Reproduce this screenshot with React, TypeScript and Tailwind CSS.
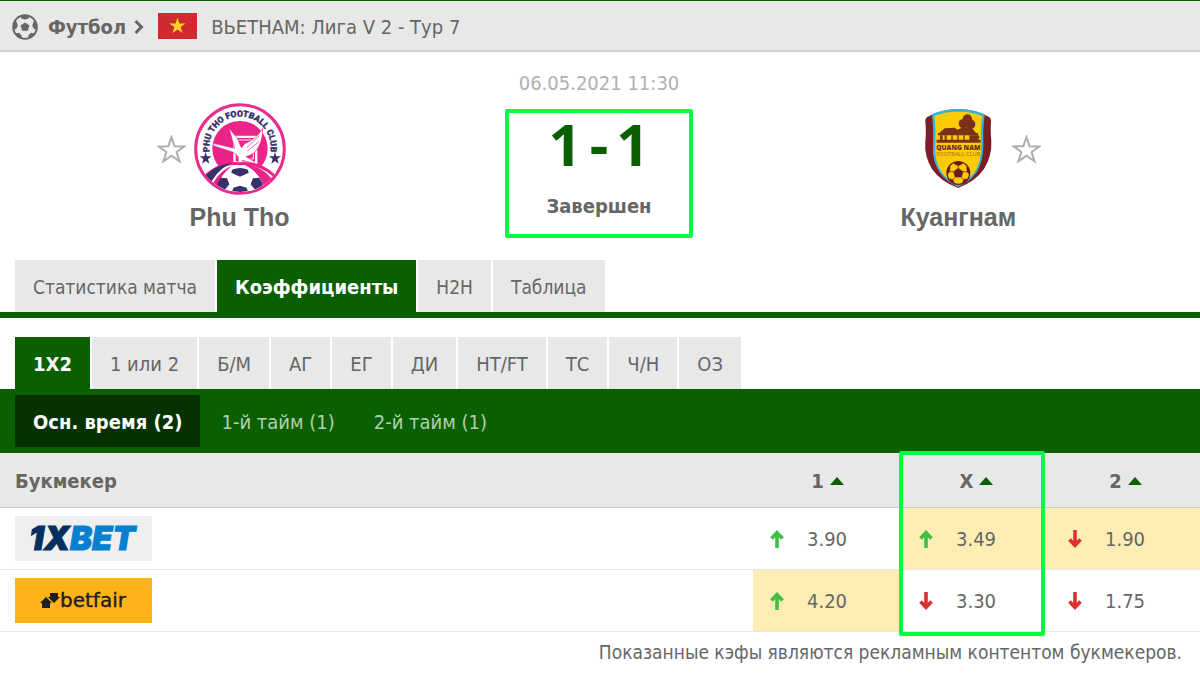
import { ReactNode } from "react";

type Trend = "up" | "down";

interface Odd {
  value: string;
  trend: Trend;
  best?: boolean;
}

const mainTabs = ["Статистика матча", "Коэффициенты", "H2H", "Таблица"];
const marketTabs = ["1X2", "1 или 2", "Б/М", "АГ", "ЕГ", "ДИ", "HT/FT", "ТС", "Ч/Н", "ОЗ"];
const periodTabs = ["Осн. время (2)", "1-й тайм (1)", "2-й тайм (1)"];

const rows: { name: string; logo: ReactNode; odds: Odd[] }[] = [
  {
    name: "1xBet",
    logo: <OneXBetLogo />,
    odds: [
      { value: "3.90", trend: "up" },
      { value: "3.49", trend: "up", best: true },
      { value: "1.90", trend: "down", best: true },
    ],
  },
  {
    name: "betfair",
    logo: <BetfairLogo />,
    odds: [
      { value: "4.20", trend: "up", best: true },
      { value: "3.30", trend: "down" },
      { value: "1.75", trend: "down" },
    ],
  },
];

export default function App() {
  return (
    <div className="min-h-screen bg-white font-['DejaVu_Sans_Condensed','Noto_Sans',sans-serif] text-xl leading-6 text-[#666]">
      <Breadcrumbs />
      <MatchHeader />

      {/* Main tabs */}
      <nav className="flex gap-0.5 border-b-[6px] border-[#0a5f00] px-[15px]">
        {mainTabs.map((tab, i) => (
          <button
            key={tab}
            className={`h-[52px] px-[18px] pt-0.5 whitespace-nowrap ${
              i === 1 ? "bg-[#0a5f00] font-bold text-white" : "bg-[#e8e8e8] text-[19px]"
            }`}
          >
            {tab}
          </button>
        ))}
      </nav>

      {/* Market tabs */}
      <nav className="mt-[19px] flex gap-0.5 px-[15px]">
        {marketTabs.map((tab, i) => (
          <button
            key={tab}
            className={`h-[52px] px-[18px] pt-0.5 whitespace-nowrap ${
              i === 0 ? "bg-[#0a5f00] font-bold text-white" : "bg-[#e8e8e8]"
            }`}
          >
            {tab}
          </button>
        ))}
      </nav>

      {/* Period tabs */}
      <nav className="flex gap-[3px] bg-[#0a5f00] px-[15px] py-1.5">
        {periodTabs.map((tab, i) => (
          <button
            key={tab}
            className={`h-[52px] px-[18px] pt-0.5 whitespace-nowrap ${
              i === 0 ? "bg-[#053200] font-bold text-white" : "text-[#b3cfb0]"
            }`}
          >
            {tab}
          </button>
        ))}
      </nav>

      <OddsTable />

      <p className="px-[18px] pt-2 text-right text-[19px]">
        Показанные кэфы являются рекламным контентом букмекеров.
      </p>
    </div>
  );
}

function Breadcrumbs() {
  return (
    <header className="flex h-[52px] items-center border-t border-b-2 border-t-[#0a5f00] border-b-[#d2d2d2] bg-[#e8e8e8] px-3 pt-0.5">
      <BallIcon />
      <a href="#football" className="ml-2.5 font-bold">
        Футбол
      </a>
      <svg viewBox="0 0 10 14" className="ml-2 h-3.5 w-2.5" fill="none" stroke="#666" strokeWidth="3">
        <path d="M1.5 1 L7.5 7 L1.5 13" />
      </svg>
      <svg viewBox="0 0 39 26" className="mr-3.5 mb-0.5 ml-3.5 h-[26px] w-[39px]">
        <rect width="39" height="26" fill="#d02a31" />
        <path
          d="M19.5 4.5 L21.4 10.4 L27.6 10.4 L22.6 14.1 L24.5 20 L19.5 16.4 L14.5 20 L16.4 14.1 L11.4 10.4 L17.6 10.4 Z"
          fill="#fcd32a"
        />
      </svg>
      <span>ВЬЕТНАМ: Лига V 2 - Тур 7</span>
    </header>
  );
}

function MatchHeader() {
  return (
    <section className="grid grid-cols-[2fr_1fr_2fr] pr-0.5 pb-[22px]">
      <TeamColumn name="Phu Tho">
        <StarButton label="Phu Tho" />
        <PhuThoCrest />
      </TeamColumn>

      <div className="flex flex-col items-center pt-[19px]">
        <time className="text-[#b0b0b0]">06.05.2021 11:30</time>
        <div className="mt-3.5 flex h-[129px] w-[188px] flex-col items-center rounded-xs border-4 border-[#00ff40]">
          <div className="flex gap-2 font-['Noto_Sans',sans-serif] text-[58px] leading-[62px] font-bold text-[#0a5f00]">
            <span>1</span>
            <span>-</span>
            <span>1</span>
          </div>
          <span className="mt-[19px] font-bold">Завершен</span>
        </div>
      </div>

      <TeamColumn name="Куангнам">
        <span />
        <QuangNamCrest />
        <StarButton label="Куангнам" />
      </TeamColumn>
    </section>
  );
}

function TeamColumn({ name, children }: { name: string; children: ReactNode }) {
  return (
    <div className="flex flex-col items-center pt-[51px]">
      <div className="grid grid-cols-[1fr_auto_1fr] items-center gap-2">{children}</div>
      <h2 className="mt-1.5 font-['Liberation_Sans',sans-serif] text-[25px] leading-8 font-bold">{name}</h2>
    </div>
  );
}

function OddsTable() {
  return (
    <div className="relative">
      <table className="w-full table-fixed border-collapse">
        <thead>
          <tr className="h-[54px] border-b border-[#ccc] bg-[#e8e8e8]">
            <th className="pt-0.5 pl-[15px] text-left font-bold">Букмекер</th>
            {["1", "X", "2"].map((h) => (
              <th key={h} className="w-[149px] pt-0.5 font-bold">
                <span className="flex items-center justify-center gap-1.5">
                  {h}
                  <svg viewBox="0 0 14 8" className="h-2 w-3.5" fill="#0a5f00">
                    <path d="M7 0 L14 8 H0 Z" />
                  </svg>
                </span>
              </th>
            ))}
          </tr>
        </thead>
        <tbody>
          {rows.map((row) => (
            <tr key={row.name} className="h-[62px] border-b border-[#e6e6e6]">
              <td className="pl-[15px]">
                <a href={`#${row.name}`} className="block w-[137px]">
                  {row.logo}
                </a>
              </td>
              {row.odds.map((odd, i) => (
                <td key={i} className={odd.best ? "bg-[#fcedb5]" : ""}>
                  <span className="flex items-center gap-[23px] pt-px pl-[17px]">
                    <TrendArrow trend={odd.trend} />
                    {odd.value}
                  </span>
                </td>
              ))}
            </tr>
          ))}
        </tbody>
      </table>
      {/* Frame around the draw column */}
      <div className="pointer-events-none absolute -top-0.5 right-[155px] -bottom-1 w-[146px] rounded-xs border-4 border-[#00ff40]" />
    </div>
  );
}

function TrendArrow({ trend }: { trend: Trend }) {
  return (
    <svg
      viewBox="0 0 14 18"
      className={`h-[18px] w-3.5 ${trend === "up" ? "text-[#3fbe43]" : "rotate-180 text-[#dc2f2f]"}`}
      fill="none"
      stroke="currentColor"
    >
      <path d="M7 18 V3" strokeWidth="3.6" />
      <path d="M1.5 8.5 L7 2.7 L12.5 8.5" strokeWidth="3.6" />
    </svg>
  );
}

function StarButton({ label }: { label: string }) {
  return (
    <button aria-label={label}>
      <svg viewBox="1 1 26 26" className="size-[29px]" fill="none" stroke="#adadad" strokeWidth="1.8">
        <path d="M14 3 L16.8 11 L25.5 11.2 L18.6 16.3 L21.2 24.5 L14 19.6 L6.8 24.5 L9.4 16.3 L2.5 11.2 L11.2 11 Z" />
      </svg>
    </button>
  );
}

function BallIcon() {
  return (
    <svg viewBox="0 0 26 26" className="size-[26px]">
      <circle cx="13" cy="13" r="11.8" fill="none" stroke="#666" strokeWidth="2" />
      <g fill="#666">
        <path d="M13 8.4 L17.4 11.6 L15.8 16.8 H10.2 L8.6 11.6 Z" />
        <path d="M8.5 1.8 H17.5 L16.6 4.4 L13 5.6 L9.4 4.4 Z" />
        <path d="M24.6 9.5 V15.6 L22 15 L20.2 11.8 L21.4 8 L22.6 6 Z" />
        <path d="M1.4 9.5 V15.6 L4 15 L5.8 11.8 L4.6 8 L3.4 6 Z" />
        <path d="M21 22 L16 24.8 L16.4 21.4 L19 18.8 L22.4 19.4 Z" />
        <path d="M5 22 L10 24.8 L9.6 21.4 L7 18.8 L3.6 19.4 Z" />
      </g>
    </svg>
  );
}

function PhuThoCrest() {
  return (
    <svg viewBox="0 0 276 276" className="size-[92px]">
      <defs>
        <path id="phu-tho-arc" d="M48 152 A92 92 0 1 1 228 152" />
        <clipPath id="phu-tho-clip">
          <circle cx="138" cy="138" r="129" />
        </clipPath>
      </defs>
      <circle cx="138" cy="138" r="133" fill="#fff" stroke="#e92c8d" strokeWidth="9" />
      <circle cx="138" cy="137" r="83" fill="#ea2488" />
      <text fill="#37306b" fontFamily="Roboto, 'Liberation Sans', sans-serif" fontSize="26" fontWeight="900" stroke="#37306b" strokeWidth="1">
        <textPath href="#phu-tho-arc" startOffset="50%" textAnchor="middle">
          PHU THO FOOTBALL CLUB
        </textPath>
      </text>
      <g fill="#37306b">
        <path d="M35 147 L39 160 H53 L42 168 L46 182 L35 174 L24 182 L28 168 L17 160 H31 Z" />
        <path d="M243 147 L247 160 H261 L250 168 L254 182 L243 174 L232 182 L236 168 L225 160 H239 Z" />
      </g>
      {/* Crane in front of the gate */}
      <path d="M118 98 H190 V182 H118 Z M125 105 V175 H183 V105 Z" fill="#fff" fillRule="evenodd" />
      <path d="M133 111 H178 V168 H133 Z" fill="none" stroke="#fff" strokeWidth="3" />
      <path
        d="M105 76 L130 106 L142 134 L152 122 Q186 110 206 76 Q207 118 184 146 Q170 158 156 161 L182 176 L178 181 L146 172 L140 184 L132 182 L134 162 L118 148 L58 128 L58 121 L122 136 Z"
        fill="#fff"
        stroke="#ea2488"
        strokeWidth="2"
      />
      <path d="M196 98 L158 134 M195 116 L160 144" stroke="#ea2488" strokeWidth="2" />
      {/* Stripes and ball */}
      <g clipPath="url(#phu-tho-clip)">
        <path d="M20 280 Q60 180 138 178 Q216 180 256 280 Z" fill="#fff" />
        <path d="M14 240 Q70 174 138 182 Q206 174 262 240" fill="none" stroke="#ea2488" strokeWidth="9" />
        <path d="M16 242 Q52 186 112 181 Q64 202 40 262 Z" fill="#37306b" />
        <path d="M46 262 Q70 206 114 188 Q78 214 62 276 Z" fill="#ea2488" />
        <path d="M138 181 Q206 184 242 240 L216 272 Q200 200 138 181 Z" fill="#ea2488" />
        <circle cx="138" cy="253" r="63" fill="#fff" />
        <g fill="#37306b">
          <path d="M114 200 Q138 190 162 200 L164 209 L138 221 L112 209 Z" />
          <path d="M70 242 L80 224 L99 226 L106 244 L90 264 L72 262 Z" />
          <path d="M206 242 L196 224 L177 226 L170 244 L186 264 L204 262 Z" />
          <path d="M118 254 L138 248 L158 254 L166 280 H110 Z" />
        </g>
      </g>
    </svg>
  );
}

function QuangNamCrest() {
  return (
    <svg viewBox="0 0 276 276" className="size-[92px]">
      <defs>
        <clipPath id="quang-nam-ball">
          <circle cx="139" cy="210" r="34" />
        </clipPath>
      </defs>
      <path
        d="M46 42 Q92 17 138 19 Q186 17 231 42 Q238 46 237 58 Q235 82 238 115 Q240 160 216 198 Q190 236 138 255 Q86 236 60 198 Q36 160 40 115 Q43 82 40 58 Q39 46 46 42 Z"
        fill="#7b1f27"
      />
      <path
        d="M60 34 Q96 18 138 19 Q182 18 218 34 Q211 80 214 125 Q214 174 194 208 Q174 236 138 252 Q102 236 83 208 Q60 174 63 125 Q66 80 60 34 Z"
        fill="#35b5dc"
      />
      <path
        d="M67 39 Q100 25 138 26 Q178 25 211 39 Q204 80 208 125 Q208 176 188 208 Q168 234 138 246 Q108 234 89 208 Q67 176 70 125 Q73 80 67 39 Z"
        fill="#fbcb08"
      />
      <g fill="#7b3018">
        <circle cx="166" cy="48" r="14" />
        <circle cx="154" cy="62" r="14" />
        <circle cx="175" cy="64" r="15" />
        <path d="M84 88 L98 76 L128 74 L136 80 L156 72 L182 78 L204 104 L196 106 V92 H86 Z" />
        <path d="M78 90 H198 V97 H78 Z" />
        <path d="M84 97 H92 V112 H84 Z M98 97 H104 V112 H98 Z M118 97 H122 V112 H118 Z M136 97 H140 V112 H136 Z M154 97 H158 V112 H154 Z M172 97 H200 V112 H172 Z" />
        <path d="M74 110 H206 V119 H74 Z" />
      </g>
      <g textAnchor="middle" fontFamily="'Open Sans', sans-serif">
        <text x="139" y="140" fontSize="20" fontWeight="800" fill="#7b1f27">
          QUANG NAM
        </text>
        <text x="139" y="159" fontSize="17" fill="#a86a10">
          FOOTBALL CLUB
        </text>
      </g>
      <g clipPath="url(#quang-nam-ball)" fill="#6e1a20" stroke="#6e1a20" strokeWidth="2">
        <path d="M139 196 L153 206 L148 222 H130 L125 206 Z" />
        <path d="M122 174 H156 L150 183 L139 188 L128 183 Z" />
        <path d="M104 190 L114 193 L112 207 L104 216 Z M174 190 L164 193 L166 207 L174 216 Z" />
        <path d="M112 228 L122 230 L128 244 H112 Z M166 228 L156 230 L150 244 H166 Z" />
        <path d="M139 188 V196 M153 206 L166 206 M125 206 L112 206 M148 222 L156 231 M130 222 L122 231" />
      </g>
      <circle cx="139" cy="210" r="34" fill="none" stroke="#6e1a20" strokeWidth="4" />
    </svg>
  );
}

function OneXBetLogo() {
  return (
    <svg viewBox="0 0 137 45" className="h-[45px] w-[137px]">
      <rect width="137" height="45" fill="#efefef" />
      <text
        x="14"
        y="34"
        fontFamily="Inter, 'Open Sans', sans-serif"
        fontSize="33"
        fontWeight="900"
        fontStyle="italic"
        strokeWidth="1"
      >
        <tspan fill="#04305f" stroke="#04305f">
          1X
        </tspan>
        <tspan fill="#0580d1" stroke="#0580d1">
          BET
        </tspan>
      </text>
    </svg>
  );
}

function BetfairLogo() {
  return (
    <svg viewBox="0 0 137 45" className="h-[45px] w-[137px]">
      <rect width="137" height="45" fill="#ffb319" />
      <path d="M25 25 L31 19 L37 25 H35 V30 H27 V25 Z" fill="#1e1e1e" />
      <path d="M33 19 H35 V15 H43 V19 H45 L39 25 Z" fill="#1e1e1e" />
      <text x="45" y="29" fontFamily="'DejaVu Sans', sans-serif" fontSize="20" fill="#1e1e1e" stroke="#1e1e1e" strokeWidth="0.4">
        betfair
      </text>
    </svg>
  );
}
